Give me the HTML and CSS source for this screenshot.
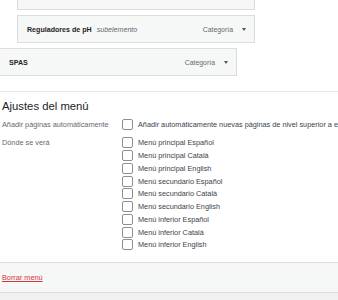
FILE: index.html
```html
<!DOCTYPE html>
<html lang="es">
<head>
    <meta charset="UTF-8">
    <meta name="viewport" content="width=device-width, initial-scale=1.0">
    <title>Menús</title>
    <link rel="stylesheet" href="styles.css">
</head>
<body>
    <div id="panel">
        <div id="menu_items">
            <div class="item sub first"></div>
            <div class="item sub">
                <span class="title"><b>Reguladores de pH</b><i>subelemento</i></span>
                <span class="type">Categoría</span>
                <span class="arrow"></span>
            </div>
            <div class="item root">
                <span class="title"><b>SPAS</b></span>
                <span class="type">Categoría</span>
                <span class="arrow"></span>
            </div>
        </div>
        <div id="settings">
            <h3>Ajustes del menú</h3>
            <div class="row first_row">
                <div class="label">Añadir páginas automáticamente</div>
                <div class="opts">
                    <label class="opt"><input type="checkbox">Añadir automáticamente nuevas páginas de nivel superior a este menú</label>
                </div>
            </div>
            <div class="row">
                <div class="label">Dónde se verá</div>
                <div class="opts">
                    <label class="opt"><input type="checkbox">Menú principal Español</label>
                    <label class="opt"><input type="checkbox">Menú principal Català</label>
                    <label class="opt"><input type="checkbox">Menú principal English</label>
                    <label class="opt"><input type="checkbox">Menú secundario Español</label>
                    <label class="opt"><input type="checkbox">Menú secundario Català</label>
                    <label class="opt"><input type="checkbox">Menú secundario English</label>
                    <label class="opt"><input type="checkbox">Menú inferior Español</label>
                    <label class="opt"><input type="checkbox">Menú inferior Català</label>
                    <label class="opt"><input type="checkbox">Menú inferior English</label>
                </div>
            </div>
        </div>
        <div id="footer">
            <a href="#" class="delete">Borrar menú</a>
        </div>
    </div>
</body>
</html>
```

FILE: styles.css
```css
html{
    background: #f0f0f1;
}
body{
    margin: 0;
    overflow: hidden;
    font-family: "Liberation Sans", Arial, sans-serif;
    font-size: 7.3px;
    color: #3c434a;
}
#panel{
    background: #fff;
}
#menu_items{
    padding-bottom: 15px;
}
.item{
    display: flex;
    align-items: center;
    box-sizing: border-box;
    width: 238px;
    height: 28px;
    margin-top: 5px;
    padding: 0 8px 0 9px;
    background: #f6f7f7;
    border: 1px solid #dcdcde;
    white-space: nowrap;
}
.item.sub{
    margin-left: 17px;
}
.item.first{
    margin-top: -18px;
}
.item.root{
    margin-left: -1px;
}
.title b{
    font-weight: bold;
    font-size: 7.1px;
    color: #1d2327;
}
.title i{
    margin-left: 5px;
    font-size: 7.1px;
    color: #646970;
}
.type{
    margin-left: auto;
    font-size: 6.9px;
    color: #646970;
}
.arrow{
    width: 0;
    height: 0;
    margin-left: 9px;
    border-left: 2.5px solid transparent;
    border-right: 2.5px solid transparent;
    border-top: 3px solid #50575e;
}
#settings{
    padding-left: 2px;
    border-top: 1px solid #e6e6e6;
}
#settings h3{
    margin: 7px 0 0;
    font-size: 11.3px;
    line-height: 14px;
    font-weight: normal;
    color: #1d2327;
}
.row{
    display: flex;
    margin-top: 5.5px;
}
.first_row{
    margin-top: 5px;
}
.label{
    width: 120px;
    flex: none;
    line-height: 12.75px;
    color: #646970;
    white-space: nowrap;
}
.first_row .label{
    line-height: 13px;
}
.opt{
    display: flex;
    align-items: center;
    height: 12.75px;
    white-space: nowrap;
}
.first_row .opt{
    height: 13px;
}
.opt input{
    appearance: none;
    -webkit-appearance: none;
    box-sizing: border-box;
    flex: none;
    width: 11px;
    height: 11px;
    margin: 0 5px 0 0;
    background: #fff;
    border: 1px solid #8c8f94;
    border-radius: 2px;
}
#footer{
    margin-top: 10.75px;
    height: 29px;
    line-height: 29px;
    padding-left: 2px;
    background: #f6f7f7;
    border-top: 1px solid #dcdcde;
    border-bottom: 1px solid #dcdcde;
}
.delete{
    color: #d63638;
    text-decoration: underline;
}
```
